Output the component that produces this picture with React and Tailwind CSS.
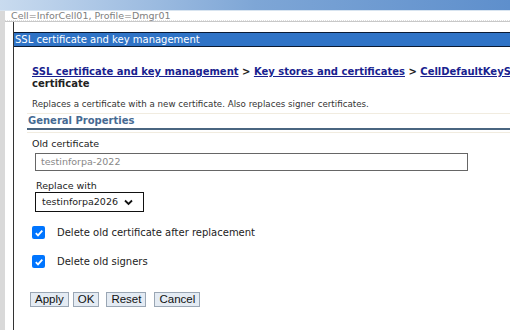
import * as React from 'react';

const VERD = { fontFamily: '"DejaVu Sans", Verdana, sans-serif' };

function Check({ label }) {
  return (
    <label className="flex items-center">
      <span className="shrink-0 w-[13px] h-[13px] rounded-[2px] bg-[#0075ff] flex items-center justify-center ml-[31px]">
        <svg width="10" height="10" viewBox="0 0 10 10">
          <path d="M1.8 5.2 L4 7.4 L8.3 2.6" stroke="#fff" strokeWidth="1.8" fill="none" />
        </svg>
      </span>
      <span className="ml-[12px] text-[10px] text-[#222] whitespace-nowrap">{label}</span>
    </label>
  );
}

function Btn({ children, className = '' }) {
  return (
    <button
      className={`h-[15px] border border-[#9aa6b4] bg-[#e4ebf3] text-[11.5px] text-[#111] leading-none px-[4px] ${className}`}
      style={{ fontFamily: '"Liberation Sans", Arial, sans-serif' }}
    >
      {children}
    </button>
  );
}

export default function App() {
  return (
    <div className="w-[510px] h-[330px] bg-white overflow-hidden relative" style={VERD}>
      <div className="h-[10px] bg-gradient-to-r from-[#c9dbef] via-[#7ea6d6] to-[#5e8fcc]" />
      <div className="h-[1px] bg-[#d8e4f0]" />
      <div className="flex h-[319px]">
        <div className="shrink-0 w-[5px] bg-[#d9d9d9]" />
        <div className="flex-1 min-w-0 flex flex-col">
          <div className="h-[10px] pl-[6px] text-[9.5px] leading-[10px] text-[#808080] border-b border-dotted border-[#ddd] whitespace-nowrap">
            Cell=InforCell01, Profile=Dmgr01
          </div>
          <div className="h-[1px] bg-[#c8c8c8]" />
          <div className="flex-1 flex min-w-0">
            <div className="shrink-0 w-[8px]" />
            <div className="flex-1 min-w-0 border-l border-[#333] flex flex-col">
              <div className="h-[10px]" />
              <div className="h-[15px] bg-[#2f73c6] border-t border-b border-[#0a1a33] text-white text-[10px] leading-[13px] pl-[1px] whitespace-nowrap">
                SSL certificate and key management
              </div>
              <div className="pl-[18px] pt-[19px] text-[10px] font-bold leading-[12px] whitespace-nowrap">
                <span className="text-[#1a1f8f] underline">SSL certificate and key management</span>
                <span className="text-[#222]"> &gt; </span>
                <span className="text-[#1a1f8f] underline">Key stores and certificates</span>
                <span className="text-[#222]"> &gt; </span>
                <span className="text-[#1a1f8f] underline">CellDefaultKeyStore</span>
                <div className="text-[#222]">certificate</div>
              </div>
              <div className="pl-[18px] pt-[8px] text-[8.7px] text-[#333] leading-[12px] whitespace-nowrap">
                Replaces a certificate with a new certificate. Also replaces signer certificates.
              </div>
              <div className="ml-[13px] mt-[3px] border-t border-[#f1ece0]">
                <div className="text-[10px] font-bold text-[#466a92] leading-[12px] pt-[1px] pl-[1px]">General Properties</div>
                <div className="h-[2px] bg-[#4a6580] mt-[1px]" />
                <div className="h-[1px] bg-[#f1ece0] mt-[2px]" />
              </div>
              <div className="pl-[18px] pt-[5px] text-[9.5px] text-[#222] leading-[12px]">Old certificate</div>
              <div className="ml-[21px] mt-[3px] w-[433px] h-[18px] border border-[#666] text-[9.5px] text-[#888] leading-[16px] pl-[5px]">
                testinforpa-2022
              </div>
              <div className="pl-[22px] pt-[9px] text-[9.5px] text-[#222] leading-[11px]">Replace with</div>
              <div className="ml-[21px] mt-[1px] w-[109px] h-[20px] border border-[#111] flex items-center pl-[6px] text-[9.5px] text-[#222]">
                <span>testinforpa2026</span>
                <svg className="ml-[6px]" width="9" height="7" viewBox="0 0 9 7">
                  <path d="M1 1.5 L4.5 5 L8 1.5" stroke="#111" strokeWidth="1.8" fill="none" />
                </svg>
              </div>
              <div className="mt-[13px] -ml-[13px]">
                <Check label="Delete old certificate after replacement" />
              </div>
              <div className="mt-[14px] -ml-[13px]">
                <Check label="Delete old signers" />
              </div>
              <div className="mt-[23px] ml-[16px] flex">
                <Btn>Apply</Btn>
                <Btn className="ml-[4px]">OK</Btn>
                <Btn className="ml-[7px]">Reset</Btn>
                <Btn className="ml-[8px]">Cancel</Btn>
              </div>
            </div>
          </div>
        </div>
      </div>
    </div>
  );
}
